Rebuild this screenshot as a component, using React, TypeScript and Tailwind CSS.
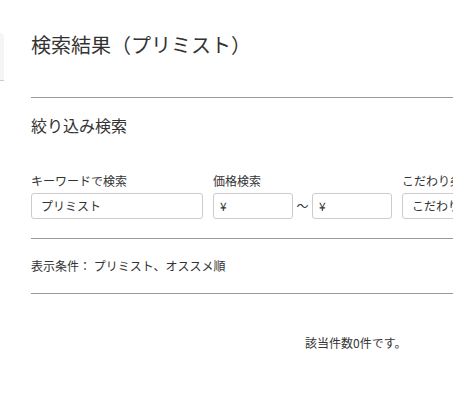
const font = { fontFamily: '"Noto Sans CJK JP", "Noto Sans", sans-serif' };

export default function App() {
  return (
    <div className="relative w-[453px] h-[410px] overflow-hidden bg-white text-[#333]" style={font}>
      {/* sidebar edge */}
      <div className="absolute left-0 top-[33px] w-[4px] h-[48px] bg-[#f5f5f5] border-b border-[#ccc] rounded-tr" />

      <div className="w-[700px] pl-[31px] pt-[31px]">
        <h1 className="text-[20px] leading-[28px] text-[#333]">検索結果（プリミスト）</h1>
        <hr className="mt-[38px] border-t border-[#999]" />

        <h2 className="mt-[15px] text-[16px] leading-[24px]">絞り込み検索</h2>

        <div className="mt-[36px] flex items-end gap-[10px]">
          <div className="flex flex-col">
            <label className="text-[12px] leading-[16px] mb-[4px]">キーワードで検索</label>
            <div className="w-[172px] h-[26px] border border-[#ccc] rounded-[3px] px-[9px] text-[12px] leading-[24px]">
              プリミスト
            </div>
          </div>
          <div className="flex flex-col">
            <label className="text-[12px] leading-[16px] mb-[4px]">価格検索</label>
            <div className="flex items-center">
              <div className="w-[80px] h-[26px] border border-[#ccc] rounded-[3px] px-[6px] text-[12px] leading-[24px]">¥</div>
              <span className="w-[19px] text-center text-[12px]">～</span>
              <div className="w-[80px] h-[26px] border border-[#ccc] rounded-[3px] px-[6px] text-[12px] leading-[24px]">¥</div>
            </div>
          </div>
          <div className="flex flex-col">
            <label className="text-[12px] leading-[16px] mb-[4px]">こだわり条件</label>
            <div className="w-[120px] h-[26px] border border-[#ccc] rounded-[3px] px-[9px] text-[12px] leading-[24px]">
              こだわり条件
            </div>
          </div>
        </div>

        <hr className="mt-[19px] border-t border-[#999]" />
        <p className="mt-[18px] text-[12px] leading-[18px]">表示条件： プリミスト、オススメ順</p>
        <hr className="mt-[18px] border-t border-[#999]" />
      </div>

      <p className="mt-[40px] pl-[305px] text-[12px] leading-[18px]">該当件数0件です。</p>
    </div>
  );
}
